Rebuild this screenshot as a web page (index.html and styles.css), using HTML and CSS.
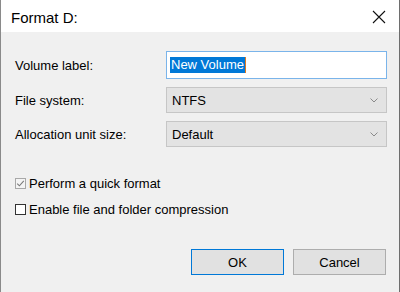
FILE: index.html
```html
<!DOCTYPE html>
<html>
<head>
<meta charset="utf-8">
<link rel="stylesheet" href="styles.css">
</head>
<body>
<div class="window">
  <div class="titlebar">
    <span class="title">Format D:</span>
    <svg class="close" width="14" height="14" viewBox="0 0 14 14"><path d="M1 1 L13 13 M13 1 L1 13" stroke="#111" stroke-width="1.1" fill="none"/></svg>
  </div>
  <div class="content">
    <div class="form">
      <div class="lbl">Volume label:</div>
      <div class="textbox"><span class="sel">New Volume</span><span class="caret"></span></div>
      <div class="lbl">File system:</div>
      <div class="combo"><span>NTFS</span><svg class="chev" width="8" height="5" viewBox="0 0 8 5"><path d="M0.5 0.5 L4 4 L7.5 0.5" stroke="#8a8a8a" stroke-width="1" fill="none"/></svg></div>
      <div class="lbl">Allocation unit size:</div>
      <div class="combo"><span>Default</span><svg class="chev" width="8" height="5" viewBox="0 0 8 5"><path d="M0.5 0.5 L4 4 L7.5 0.5" stroke="#8a8a8a" stroke-width="1" fill="none"/></svg></div>
    </div>
    <div class="checks">
      <div class="check">
        <span class="box checked"><svg width="9" height="9" viewBox="0 0 9 9"><path d="M1.2 4.6 L3.4 6.8 L7.8 1.8" stroke="#7a7a7a" stroke-width="1.1" fill="none"/></svg></span>
        <span>Perform a quick format</span>
      </div>
      <div class="check">
        <span class="box"></span>
        <span>Enable file and folder compression</span>
      </div>
    </div>
    <div class="buttons">
      <div class="btn default">OK</div>
      <div class="btn">Cancel</div>
    </div>
  </div>
</div>
</body>
</html>
```

FILE: styles.css
```css
html, body {
  margin: 0;
  padding: 0;
}
body {
  width: 400px;
  height: 292px;
  overflow: hidden;
  font-family: "Liberation Sans", Arial, sans-serif;
  color: #000;
}
.window {
  box-sizing: border-box;
  width: 400px;
  height: 292px;
  border-left: 1px solid #8a8a8a;
  border-right: 1px solid #6e6e6e;
  background: #f0f0f0;
  display: flex;
  flex-direction: column;
}
.titlebar {
  height: 32px;
  background: #fff;
  display: flex;
  align-items: center;
  justify-content: space-between;
  padding: 0 13px 0 10px;
  flex-shrink: 0;
}
.title {
  font-size: 15px;
  margin-top: 2px;
}
.close {
  display: block;
  margin-top: 1px;
}
.content {
  padding: 19px 13px 0 14px;
  display: flex;
  flex-direction: column;
}
.form {
  display: grid;
  grid-template-columns: 151px 221px;
  grid-template-rows: 28px 26px 26px;
  row-gap: 8px;
  align-items: center;
}
.lbl {
  font-size: 13px;
}
.textbox {
  box-sizing: border-box;
  height: 28px;
  background: #fff;
  border: 1px solid #7ab4ea;
  display: flex;
  align-items: center;
  padding-left: 3px;
  font-size: 13px;
}
.sel {
  background: #0078d7;
  color: #fff;
  line-height: 16px;
  padding: 0 1px;
}
.caret {
  width: 1px;
  height: 16px;
  background: #e07a20;
}
.combo {
  box-sizing: border-box;
  height: 26px;
  background: #e3e3e3;
  border: 1px solid #c6c6c6;
  display: flex;
  align-items: center;
  justify-content: space-between;
  padding: 0 8px 0 5px;
  font-size: 13px;
}
.chev {
  display: block;
}
.checks {
  margin-top: 27px;
  display: flex;
  flex-direction: column;
  gap: 8px;
}
.check {
  height: 18px;
  display: flex;
  align-items: center;
  font-size: 13px;
}
.box {
  box-sizing: border-box;
  width: 11px;
  height: 11px;
  border: 1px solid #333;
  background: #fff;
  margin-right: 3px;
  display: flex;
  align-items: center;
  justify-content: center;
}
.box.checked {
  border-color: #a8a8a8;
  background: #f4f4f4;
}
.box svg {
  display: block;
}
.buttons {
  margin-top: 31px;
  display: flex;
  justify-content: flex-end;
  gap: 9px;
}
.btn {
  box-sizing: border-box;
  width: 93px;
  height: 26px;
  background: #e1e1e1;
  border: 1px solid #adadad;
  display: flex;
  align-items: center;
  justify-content: center;
  font-size: 13px;
}
.btn.default {
  border-color: #0078d7;
}
```
